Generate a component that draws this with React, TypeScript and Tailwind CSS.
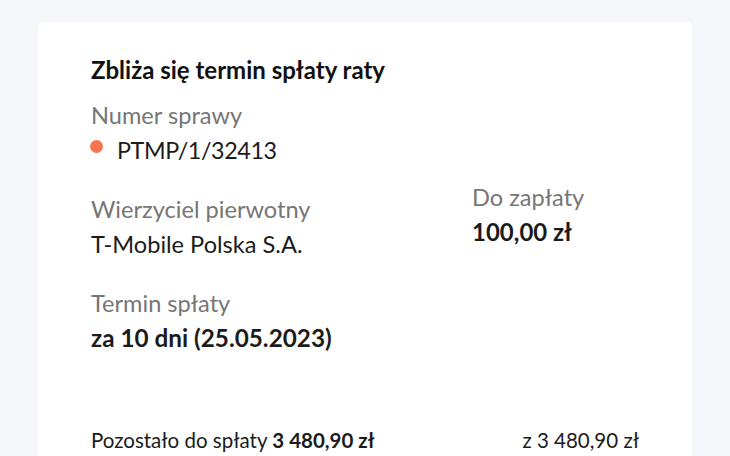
import React from "react";

function Field({ label, value, bold = false }: { label: string; value: React.ReactNode; bold?: boolean }) {
  return (
    <div className="flex flex-col">
      <div className="text-[23.6px] leading-[34.5px] text-[#767676]">{label}</div>
      <div className={`leading-[34.5px] text-[#1b1b1b] ${bold ? "text-[24.3px] font-bold" : "text-[23.6px] font-normal"}`}>{value}</div>
    </div>
  );
}

export default function App() {
  return (
    <div className="min-h-[456px] h-[456px] overflow-hidden bg-[#f5f6fa] pl-[38px] pt-[22px] font-['Lato',sans-serif]">
      <div className="w-[654px] rounded-[5px] bg-white px-[53px] pt-[30px] pb-10">
        <h1 className="text-[24px] leading-[36px] font-bold text-[#111111]">Zbliża się termin spłaty raty</h1>
        <div className="mt-[10px] grid grid-cols-[381px_1fr]">
          <div className="flex flex-col gap-[25px]">
            <Field
              label="Numer sprawy"
              value={
                <span className="flex items-center">
                  <span className="mr-[14px] ml-[-1px] mt-[-6px] h-[13px] w-[13px] rounded-full bg-[#f5774f]" />
                  <span className="text-[23.3px] tracking-[-0.4px]">PTMP/1/32413</span>
                </span>
              }
            />
            <Field label="Wierzyciel pierwotny" value="T-Mobile Polska S.A." />
            <Field label="Termin spłaty" value="za 10 dni (25.05.2023)" bold />
          </div>
          <div className="mt-[81px]">
            <div className="flex flex-col">
              <div className="text-[23.6px] leading-[36px] text-[#767676]">Do zapłaty</div>
              <div className="text-[24px] leading-[34.5px] font-bold text-[#1b1b1b]">100,00 zł</div>
            </div>
          </div>
        </div>
        <div className="mt-[73px] flex items-center justify-between text-[20.5px] leading-[25px] text-[#1b1b1b]">
          <div>
            Pozostało do spłaty <span className="font-bold">3 480,90 zł</span>
          </div>
          <div>z 3 480,90 zł</div>
        </div>
      </div>
    </div>
  );
}
